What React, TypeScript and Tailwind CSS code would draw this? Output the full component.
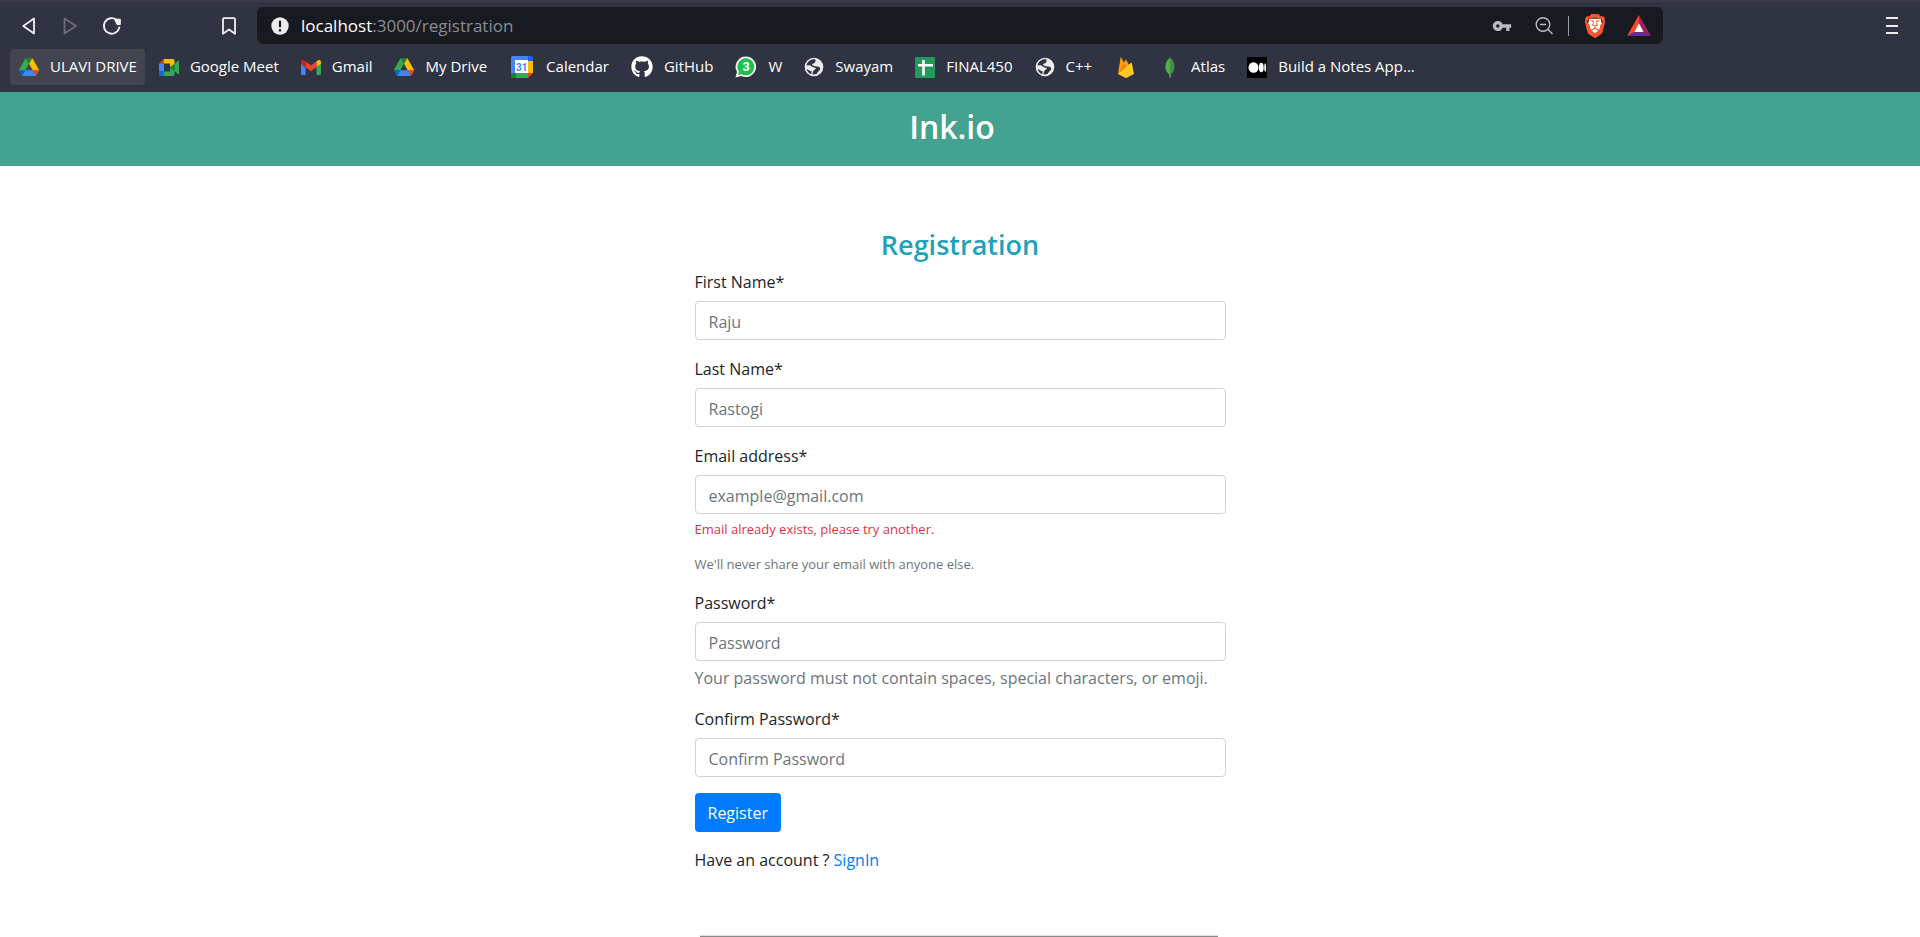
import type { ReactNode } from "react";
import { FaGithub } from "react-icons/fa";
import { SiBrave } from "react-icons/si";
import { MdVpnKey } from "react-icons/md";

function DriveIcon() {
  return (
    <svg viewBox="0 0 87.3 78" className="w-5 h-[18px]" aria-hidden="true">
      <path d="m6.6 66.85 3.85 6.65c.8 1.4 1.95 2.5 3.3 3.3l13.75-23.8h-27.5c0 1.55.4 3.1 1.2 4.5z" fill="#0066da" />
      <path d="m43.65 25-13.75-23.8c-1.35.8-2.5 1.9-3.3 3.3l-25.4 44a9.06 9.06 0 0 0 -1.2 4.5h27.5z" fill="#34a853" />
      <path d="m73.55 76.8c1.35-.8 2.5-1.9 3.3-3.3l1.6-2.75 7.65-13.25c.8-1.4 1.2-2.95 1.2-4.5h-27.5l5.85 11.5z" fill="#ea4335" />
      <path d="m43.65 25 13.75-23.8c-1.35-.8-2.9-1.2-4.5-1.2h-18.5c-1.6 0-3.15.45-4.5 1.2z" fill="#188038" />
      <path d="m59.8 53h-32.3l-13.75 23.8c1.35.8 2.9 1.2 4.5 1.2h50.8c1.6 0 3.15-.45 4.5-1.2z" fill="#4285f4" />
      <path d="m73.4 26.5-12.7-22c-.8-1.4-1.95-2.5-3.3-3.3l-13.75 23.8 16.15 28h27.45c0-1.55-.4-3.1-1.2-4.5z" fill="#fbbc04" />
    </svg>
  );
}

function MeetIcon() {
  return (
    <svg viewBox="0 0 20 17" className="w-5 h-[17px]" aria-hidden="true">
      <path d="M5 0h9a1.5 1.5 0 0 1 1.5 1.5V6L11 8V4.5H5z" fill="#fbbc04" />
      <path d="M5 0v4.5H0z" fill="#ea4335" />
      <path d="M0 4.5h5v8H0z" fill="#4285f4" />
      <path d="M0 12.5h5V17H1.5A1.5 1.5 0 0 1 0 15.500z" fill="#1967d2" />
      <path d="M5 12.5h6V8.500l4.500-3.500v10.500A1.500 1.500 0 0 1 14 17H5z" fill="#34a853" />
      <path d="M15.500 5 19 1.800c.4-.3 1-.1 1 .5v12.400c0 .6-.6.8-1 .5L15.500 12z" fill="#34a853" />
      <path d="M11 8.500l4.500-3.700v7.400z" fill="#188038" />
    </svg>
  );
}

function GmailIcon() {
  return (
    <svg viewBox="52 42 88 66" className="w-5 h-[15px]" aria-hidden="true">
      <path fill="#4285f4" d="M58 108h14V74L52 59v43c0 3.320 2.690 6 6 6" />
      <path fill="#34a853" d="M120 108h14c3.320 0 6-2.690 6-6V59l-20 15" />
      <path fill="#fbbc04" d="M120 48v26l20-15v-8c0-7.420-8.470-11.650-14.400-7.200" />
      <path fill="#ea4335" d="M72 74V48l24 18 24-18v26L96 92" />
      <path fill="#c5221f" d="M52 51v8l20 15V48l-5.600-4.200c-5.940-4.450-14.400-.22-14.400 7.200" />
    </svg>
  );
}

function CalendarIcon() {
  return (
    <svg viewBox="0 0 22 22" className="h-[22px] w-[26px]" aria-hidden="true">
      <path d="M1.500 0H17v5H5v12H0V1.500A1.500 1.500 0 0 1 1.500 0z" fill="#4285f4" />
      <path d="M17 0h3.500A1.500 1.500 0 0 1 22 1.500V5h-5z" fill="#1967d2" />
      <path d="M17 5h5v12h-5z" fill="#fbbc04" />
      <path d="M5 17h12v5H5z" fill="#34a853" />
      <path d="M0 17h5v5H1.500A1.500 1.500 0 0 1 0 20.500z" fill="#188038" />
      <path d="M17 17h5l-5 5z" fill="#ea4335" />
      <path d="M4 4h13v13H4z" fill="#fff" />
      <text x="10.800" y="14.500" textAnchor="middle" fontSize="10" fontWeight="700" fill="#4285f4" fontFamily="Roboto, sans-serif">
        31
      </text>
    </svg>
  );
}

function WhatsAppIcon() {
  return (
    <svg viewBox="0 0 22 22" className="h-[22px] w-[22px]" aria-hidden="true">
      <path d="M11 .5a10.300 10.300 0 1 1-4.800 19.500L.4 21.500 2 16A10.300 10.300 0 0 1 11 .5z" fill="#f4f4f4" />
      <path d="M11 2.300a8.500 8.500 0 1 1-4.400 15.900L3 19l1-3.400A8.500 8.500 0 0 1 11 2.300z" fill="#1fc14e" />
      <text x="11" y="15.300" textAnchor="middle" fontSize="12.500" fontWeight="700" fill="#fff" fontFamily="Roboto, sans-serif">
        3
      </text>
    </svg>
  );
}

function GlobeIcon() {
  return (
    <svg viewBox="0 0 20 20" className="size-5" aria-hidden="true">
      <circle cx="10" cy="10" r="9.300" fill="#ececee" />
      <path
        d="M11.500 2.500C7.500 1.700 3.300 4.200 2.500 8.600c1.600-.3 3.200-.5 4.300.1 1.400.8 2.600 1.900 4.200 2 1.100.1 1.200 1 .3 1.600-1.400.9-2 1.300-2.300 2.500l-.6 2.500c1.700.4 3.200.1 4.400-.5.500-1.500 1.600-2.500 2.700-3.600.9-.9.800-2.500-.2-3.200-1.200-.8-2.800-.2-4.200-.8-.9-.4-1.900-.4-2.700-1-.7-.6-.1-1.500.8-1.600 1.700-.3 2.600-1.700 2.300-4.100z"
        fill="#303342"
      />
      <path d="M2.600 12c.6 2.600 2.400 4.500 4.600 5.200l.6-2.700c-2.300-.2-3.400-2.300-5.200-2.500z" fill="#303342" />
    </svg>
  );
}

function SheetIcon() {
  return (
    <svg viewBox="0 0 20 21" className="w-5 h-[21px]" aria-hidden="true">
      <rect width="20" height="21" rx="1" fill="#23995a" />
      <path d="M3 8.300h15M8.500 3v15.500" stroke="#fff" strokeWidth="2.600" />
    </svg>
  );
}

function FirebaseIcon() {
  return (
    <svg viewBox="0 0 16 21" className="h-[21px] w-6" aria-hidden="true">
      <path d="M0 17 2.500 1c.1-.5.700-.6.900-.2L6 5.700 7.400 3c.200-.4.700-.4.900 0L16 17z" fill="#ffa000" />
      <path d="M9.300 11.500 6 5.700 0 17z" fill="#f57c00" />
      <path d="m0 17 12.800-11c.4-.4 1-.2 1.100.400L16 17l-7.200 3.700c-.5.300-1.100.3-1.600 0z" fill="#ffca28" />
    </svg>
  );
}

function AtlasIcon() {
  return (
    <svg viewBox="0 0 10 21" className="h-[21px] w-5" aria-hidden="true">
      <path d="M5 0c.6 1.600 4.600 4 4.600 10 0 4-2.600 6.600-4.200 7.700L5 17.500z" fill="#3f9143" />
      <path d="M5 0C4.400 1.600.4 4 .4 10c0 4 2.600 6.600 4.200 7.700L5 17.500z" fill="#53ad4a" />
      <path d="M4.600 17h.8l.200 3.600h-.8z" fill="#b8c4c2" />
    </svg>
  );
}

function MediumIcon() {
  return (
    <svg viewBox="0 0 20 21" className="w-5 h-[21px]" aria-hidden="true">
      <rect width="20" height="21" fill="#000" />
      <ellipse cx="6.500" cy="10.500" rx="5" ry="5.200" fill="#fff" />
      <ellipse cx="14.300" cy="10.500" rx="2.400" ry="4.800" fill="#fff" />
      <ellipse cx="18.200" cy="10.500" rx=".9" ry="4.300" fill="#fff" />
    </svg>
  );
}

const bookmarks: { label: string; icon: ReactNode; name?: string; active?: boolean }[] = [
  { label: "ULAVI DRIVE", icon: <DriveIcon />, active: true },
  { label: "Google Meet", icon: <MeetIcon /> },
  { label: "Gmail", icon: <GmailIcon /> },
  { label: "My Drive", icon: <DriveIcon /> },
  { label: "Calendar", icon: <CalendarIcon /> },
  { label: "GitHub", icon: <FaGithub className="size-[22px] text-white" /> },
  { label: "W", icon: <WhatsAppIcon /> },
  { label: "Swayam", icon: <GlobeIcon /> },
  { label: "FINAL450", icon: <SheetIcon /> },
  { label: "C++", icon: <GlobeIcon /> },
  { label: "", name: "Firebase", icon: <FirebaseIcon /> },
  { label: "Atlas", icon: <AtlasIcon /> },
  { label: "Build a Notes App...", icon: <MediumIcon /> },
];

function Toolbar() {
  return (
    <div className="flex h-[37px] items-center">
      <div className="flex w-[257px] shrink-0 items-center pl-[17px]">
        <button type="button" aria-label="Back" className="flex size-6 items-center justify-center">
          <svg viewBox="0 0 18 20" className="h-5 w-[18px]" fill="none" stroke="#f0f0f2" strokeWidth="1.800" strokeLinejoin="round">
            <path d="M14 2.500v15L3.300 10z" />
          </svg>
        </button>
        <button type="button" aria-label="Forward" className="ml-[17px] flex size-6 items-center justify-center">
          <svg viewBox="0 0 18 20" className="h-5 w-[18px]" fill="none" stroke="#6b6d78" strokeWidth="1.800" strokeLinejoin="round">
            <path d="M3.500 2.500v15L15 10z" />
          </svg>
        </button>
        <button type="button" aria-label="Reload" className="ml-[18px] flex size-6 items-center justify-center">
          <svg viewBox="0 0 20 20" className="size-5" fill="none">
            <path d="M14.500 3.800A7.800 7.800 0 1 0 17.300 11.500" stroke="#f0f0f2" strokeWidth="1.900" strokeLinecap="round" />
            <path d="M12.500 3.200h5.800v5.400h-3.300z" fill="#f0f0f2" stroke="#f0f0f2" strokeWidth="1" strokeLinejoin="round" />
          </svg>
        </button>
        <button type="button" aria-label="Bookmark this page" className="ml-[93px] flex size-6 items-center justify-center">
          <svg viewBox="0 0 16 20" className="h-5 w-4" fill="none" stroke="#f0f0f2" strokeWidth="1.800" strokeLinejoin="round">
            <path d="M2 3.200c0-.6.400-1 1-1h10c.6 0 1 .4 1 1V17.800l-6-4.300-6 4.300z" />
          </svg>
        </button>
      </div>

      <div className="flex h-full min-w-0 flex-1 items-center rounded-md bg-[#181a21] pl-[14px] pr-3">
        <svg viewBox="0 0 18 18" className="size-[18px] shrink-0" aria-hidden="true">
          <circle cx="9" cy="9" r="8.700" fill="#ececee" />
          <path d="M9 3.800v6.400M9 12.200v2.200" stroke="#181a21" strokeWidth="2.200" />
        </svg>
        <p className="ml-3 flex-1 truncate text-[17px] leading-6 text-[#8b8c91]">
          <span className="text-white">localhost</span>:3000/registration
        </p>
        <MdVpnKey className="size-5 text-[#b9babd]" />
        <svg viewBox="0 0 20 20" className="ml-[22px] size-5" fill="none" stroke="#b9babd" strokeWidth="1.400" aria-hidden="true">
          <circle cx="9" cy="8.500" r="6.800" />
          <path d="M6 8.500h6M13.800 13.300l4.700 4.700" />
        </svg>
        <span className="ml-[14px] h-5 w-px bg-[#9a9ba0]" />
        <span className="ml-[14px] grid place-items-center">
          <svg viewBox="0 0 20 24" className="col-start-1 row-start-1 h-5 w-4" aria-hidden="true">
            <path d="M3 3h14l1.500 6-3.500 9-5 4-5-4-3.500-9z" fill="#fff" />
          </svg>
          <SiBrave className="col-start-1 row-start-1 size-6 text-[#fb542b]" />
        </span>
        <svg viewBox="0 0 24 21" className="ml-5 h-[21px] w-6" aria-hidden="true">
          <path d="M12 0 0 21l7.800-4L12 8.500z" fill="#ff4724" />
          <path d="m12 0 12 21-7.800-4L12 8.500z" fill="#9e1f63" />
          <path d="M0 21h24l-7.800-4.200H7.800z" fill="#662d91" />
          <path d="m12 8.200 4.600 8.800H7.400z" fill="#fff" />
        </svg>
      </div>

      <div className="flex w-[257px] shrink-0 justify-end pr-[22px]">
        <button type="button" aria-label="Menu" className="flex h-[17px] w-3 flex-col justify-between">
          <span className="h-0.5 w-full bg-[#ececee]" />
          <span className="h-0.5 w-full bg-[#ececee]" />
          <span className="h-0.5 w-full bg-[#ececee]" />
        </button>
      </div>
    </div>
  );
}

function Browser() {
  return (
    <div className="h-[92px] overflow-hidden border-t-2 border-[#3d3b46] bg-[#303342] pt-[5px]">
      <Toolbar />
      <nav aria-label="Bookmarks" className="mt-[5px] flex pl-[10px]">
        {bookmarks.map((b) => (
          <a
            key={b.label}
            href="#"
            aria-label={b.name}
            className={
              b.active
                ? "mr-[5px] flex h-9 shrink-0 items-center rounded bg-[#424550] pl-[9px] pr-2"
                : "flex h-9 shrink-0 items-center pl-[9px] pr-[13px]"
            }
          >
            <span className="flex min-w-5 shrink-0">{b.icon}</span>
            {b.label && <span className="ml-[11px] whitespace-nowrap pb-0.5 text-[15px] leading-5 text-white">{b.label}</span>}
          </a>
        ))}
      </nav>
    </div>
  );
}

type FieldProps = { id: string; label: string; placeholder: string; type?: string; children?: ReactNode };

function Field({ id, label, placeholder, type = "text", children }: FieldProps) {
  return (
    <div className="mb-4">
      <label htmlFor={id} className="mb-1.5 block leading-[26px]">
        {label}
      </label>
      <input
        id={id}
        type={type}
        placeholder={placeholder}
        className="block h-[39px] w-full rounded border border-[#ced4da] bg-white px-[13px] pt-0.5 placeholder:text-[#6c757d]"
      />
      {children}
    </div>
  );
}

export default function App() {
  return (
    <div className="h-screen overflow-hidden bg-white font-['Segoe_UI','Open_Sans',sans-serif] text-base leading-6 text-[#212529]">
      <Browser />
      <header className="flex h-[74px] justify-center bg-[#43a390] pr-4 pt-[15px]">
        <h1 className="text-[32px] font-semibold leading-10 text-white">Ink.io</h1>
      </header>
      <main className="mx-auto mt-[61px] max-w-[531px]">
        <h2 className="mb-1.5 text-center text-[27px] font-semibold leading-9 text-[#20a2b8]">Registration</h2>
        <form>
          <Field id="first" label="First Name*" placeholder="Raju" />
          <Field id="last" label="Last Name*" placeholder="Rastogi" />
          <Field id="email" label="Email address*" placeholder="example@gmail.com" type="email">
            <p className="mt-[5px] text-[13px] leading-5 text-[#dc3545]">Email already exists, please try another.</p>
            <p className="mt-[15px] text-[13px] leading-5 text-[#6c757d]">We'll never share your email with anyone else.</p>
          </Field>
          <Field id="password" label="Password*" placeholder="Password" type="password">
            <p className="mt-[5px] text-[#6c757d]">Your password must not contain spaces, special characters, or emoji.</p>
          </Field>
          <Field id="confirm" label="Confirm Password*" placeholder="Confirm Password" type="password" />
          <button type="button" className="mb-4 block h-[39px] rounded bg-[#007bff] px-[13px] text-white">
            Register
          </button>
        </form>
        <p>
          Have an account ?{" "}
          <a href="#" className="text-[#007bff]">
            SignIn
          </a>
        </p>
        <hr className="ml-[5px] mr-2 mt-[63px] h-0.5 border-t border-[#e0e0e0] bg-[#888888]" />
      </main>
    </div>
  );
}
